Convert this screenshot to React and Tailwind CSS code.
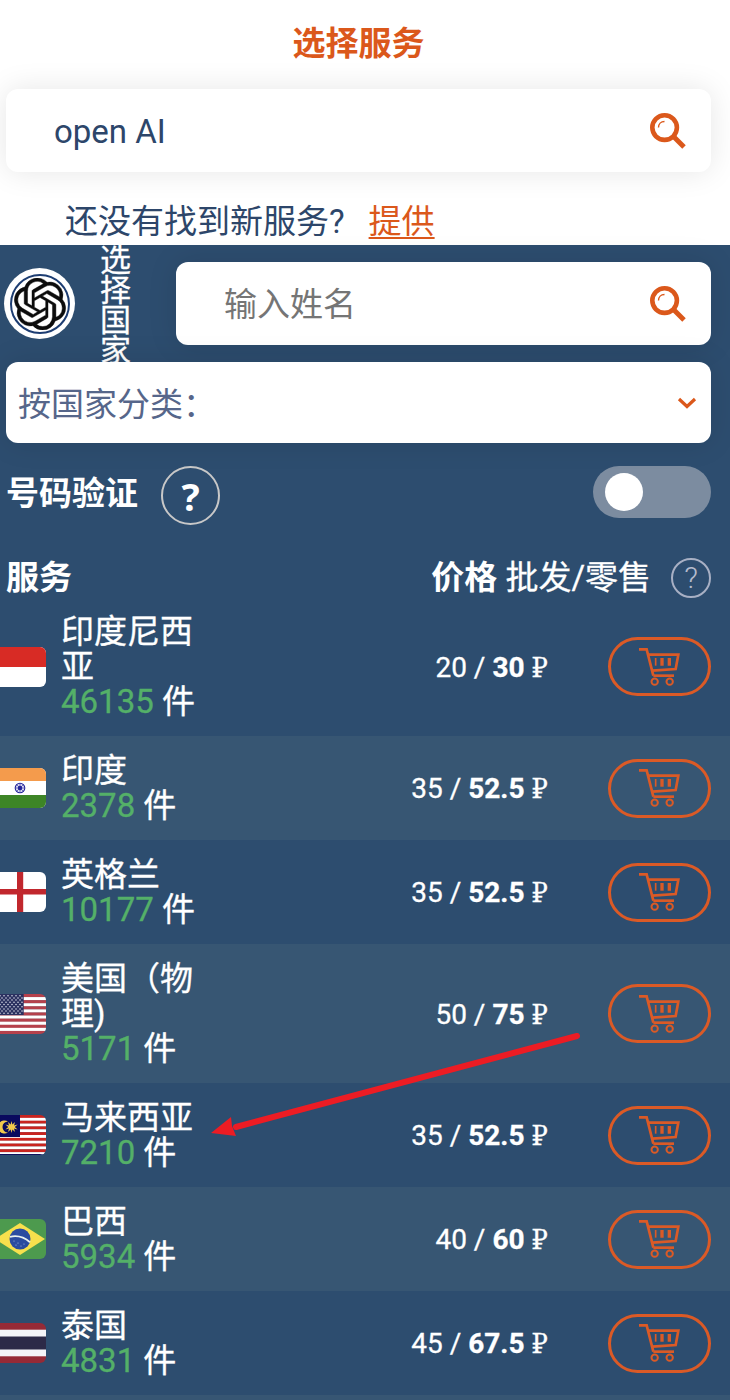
import React from "react";
import { SiOpenai } from "react-icons/si";

function FlagFrame({ children }) {
  return (
    <svg viewBox="6 0 46 40" className="block h-10 w-[46px] rounded-r-md" aria-hidden="true">
      {children}
    </svg>
  );
}

function Stripes({ colors, count }) {
  const h = 40 / count;
  return Array.from({ length: count }, (_, i) => (
    <rect key={i} x="0" y={i * h} width="52" height={h + 0.2} fill={colors[i % colors.length]} />
  ));
}

const flags = {
  id: (
    <>
      <rect width="52" height="40" fill="#fff" />
      <rect width="52" height="20" fill="#d82b25" />
    </>
  ),
  in: (
    <>
      <rect width="52" height="40" fill="#fff" />
      <rect width="52" height="13" fill="#f49b4c" />
      <rect y="27" width="52" height="13" fill="#3d8526" />
      <circle cx="26" cy="20" r="4.8" fill="#dcdcf2" stroke="#23239a" strokeWidth="1.1" />
      <path d="M26 15.5v9M21.5 20h9M22.8 16.8l6.400 6.400M29.200 16.800l-6.400 6.400" stroke="#23239a" strokeWidth="0.6" />
      <circle cx="26" cy="20" r="2.2" fill="#23239a" />
    </>
  ),
  en: (
    <>
      <rect width="52" height="40" fill="#fff" />
      <rect x="23" width="6.2" height="40" fill="#c1272d" />
      <rect y="17" width="52" height="5.5" fill="#c1272d" />
    </>
  ),
  us: (
    <>
      <Stripes colors={["#b5414c", "#ffffff"]} count={13} />
      <rect width="29.7" height="21" fill="#2b3160" />
      {Array.from({ length: 9 }, (_, r) =>
        Array.from({ length: 7 }, (_, c) => (
          <circle key={`${r}-${c}`} cx={2 + c * 4 + (r % 2) * 2} cy={1.7 + r * 2.2} r="0.75" fill="#e4e6f0" />
        ))
      )}
    </>
  ),
  my: (
    <>
      <Stripes colors={["#c9241f", "#ffffff"]} count={14} />
      <rect y="39" width="52" height="1" fill="#10105c" />
      <rect width="26" height="22" fill="#0a0a5e" />
      <path d="M14 6.5a6.5 6.5 0 1 0 0 11a5.5 5.5 0 1 1 0-11z" fill="#f2c94c" />
      <path d="M17.5 6l.9 3.6 2.600-2.700-1 3.500 3.600-.8-2.800 2.400 2.800 2.400-3.600-.8 1 3.500-2.600-2.700-.9 3.600-.9-3.600-2.600 2.700 1-3.500-3.600.8 2.800-2.400-2.800-2.400 3.600.8-1-3.500 2.600 2.700z" fill="#f2c94c" />
    </>
  ),
  br: (
    <>
      <rect width="52" height="40" fill="#4d9a4e" />
      <path d="M1 20L26 4l25 16-25 16z" fill="#f7e04d" />
      <circle cx="26" cy="20" r="10.5" fill="#2a4ba0" />
      <path d="M16 17.800c7-1.600 14.500.6 20 5.400" fill="none" stroke="#e8f0ee" strokeWidth="1.8" />
      <g fill="#a9bbe0">
        <circle cx="20" cy="22" r=".6" />
        <circle cx="24" cy="24" r=".6" />
        <circle cx="27" cy="27" r=".6" />
        <circle cx="30" cy="25" r=".6" />
        <circle cx="22" cy="26" r=".6" />
      </g>
    </>
  ),
  th: (
    <>
      <rect width="52" height="40" fill="#962a36" />
      <rect y="6.700" width="52" height="26.600" fill="#f4f4f8" />
      <rect y="13.500" width="52" height="13" fill="#2c2a48" />
    </>
  ),
};

const countries = [
  { code: "id", name: "印度尼西亚", count: 46135, bulk: "20", retail: "30" },
  { code: "in", name: "印度", count: 2378, bulk: "35", retail: "52.5" },
  { code: "en", name: "英格兰", count: 10177, bulk: "35", retail: "52.5" },
  { code: "us", name: "美国（物理)", count: 5171, bulk: "50", retail: "75" },
  { code: "my", name: "马来西亚", count: 7210, bulk: "35", retail: "52.5" },
  { code: "br", name: "巴西", count: 5934, bulk: "40", retail: "60" },
  { code: "th", name: "泰国", count: 4831, bulk: "45", retail: "67.5" },
];

function SearchIcon() {
  return (
    <svg viewBox="0 0 36 36" className="size-9" fill="none" stroke="#db581b" aria-hidden="true">
      <circle cx="14.6" cy="14.6" r="12.3" strokeWidth="4.6" />
      <path d="M23.500 23.500L34 34" strokeWidth="5" />
      <path d="M8.500 14.500c0-3.500 2.400-6 6-6" strokeWidth="1.4" />
    </svg>
  );
}

function CartIcon() {
  return (
    <svg viewBox="147 83 123 114" className="h-[38px] w-[41px]" fill="none" stroke="#db5a26" strokeWidth="8" aria-hidden="true">
      <path d="M147 87H170L190 166" />
      <path d="M175 103H265L257 146L187 151" />
      <path d="M190 166H252" />
      <path d="M197 113V136" strokeWidth="5" />
      <path d="M216 113V136M238 113V136" strokeWidth="10" />
      <circle cx="194" cy="184" r="9.500" strokeWidth="6" />
      <circle cx="239" cy="184" r="9.500" strokeWidth="6" />
    </svg>
  );
}

function SearchField({ label, ...props }) {
  return (
    <div className="flex h-[83px] min-w-0 flex-1 items-center rounded-xl bg-white pl-12 pr-[25px] shadow-[0_0_30px_rgba(0,0,0,0.1)]">
      <input
        aria-label={label}
        className="h-12 min-w-0 flex-1 bg-transparent pt-0.5 text-[33px] text-[#2d466a] outline-none placeholder:text-[#757575]"
        {...props}
      />
      <button type="button" aria-label="搜索" className="shrink-0">
        <SearchIcon />
      </button>
    </div>
  );
}

function CountryRow({ country }) {
  return (
    <tr className="even:bg-[#375673]">
      <td className="py-[17px]">
        <div className="flex items-center gap-[15px]">
          <FlagFrame>{flags[country.code]}</FlagFrame>
          <div className="w-[134px] text-[33px] leading-[35px] [-webkit-text-stroke:0.3px]">
            <div>{country.name}</div>
            <div>
              <span className="text-[#54b068]">{country.count}</span> 件
            </div>
          </div>
        </div>
      </td>
      <td className="whitespace-nowrap text-right text-[28px] [-webkit-text-stroke:0.3px]">
        {country.bulk} / <b>{country.retail}</b>{" "}
        <span className="font-['Noto_Serif']">₽</span>
      </td>
      <td className="w-[182px] pr-[19px]">
        <button
          type="button"
          aria-label={`购买 ${country.name}`}
          className="ml-auto flex h-[59px] w-[103px] items-center justify-center rounded-full border-[3px] border-[#db5a26]"
        >
          <CartIcon />
        </button>
      </td>
    </tr>
  );
}

export default function App() {
  return (
    <div className="min-h-screen overflow-hidden bg-white font-[Roboto,'Noto_Sans_CJK_SC',sans-serif] text-[#2d466a]">
      <section className="h-[245px] pl-[6px] pr-[19px]">
        <h1 className="h-[89px] pt-5 text-center text-[33px] font-bold leading-[48px] text-[#db581b]">选择服务</h1>
        <div className="flex">
          <SearchField label="选择服务" defaultValue="open AI" />
        </div>
        <p className="flex gap-6 pl-[59px] pt-[26px] text-[33px] leading-[48px]">
          <span>还没有找到新服务?</span>
          <a href="#offer" className="text-[#db581b] underline decoration-2 underline-offset-4">提供</a>
        </p>
      </section>

      <section className="relative bg-[#2d4d6f] text-white">
        <div className="flex h-[117px] items-center pl-1 pr-[19px]">
          <div className="flex size-[71px] shrink-0 items-center justify-center rounded-full bg-white">
            <div className="flex size-[60px] items-center justify-center rounded-full border-2 border-[#1d3d72]">
              <SiOpenai className="size-[52px] stroke-[#0c0c0c] stroke-[0.2] text-[#0c0c0c]" />
            </div>
          </div>
          <h2 className="ml-[25px] mr-11 w-8 pt-1 text-[31px] leading-[30px] [-webkit-text-stroke:0.3px]">选择国家</h2>
          <SearchField label="输入姓名" placeholder="输入姓名" />
        </div>

        <div className="relative pl-[6px] pr-[19px]">
          <select
            aria-label="按国家分类"
            className="block h-[81px] w-full appearance-none rounded-xl bg-white pl-3 pt-1 text-[33px] text-[#56668a] shadow-[0_0_30px_rgba(0,0,0,0.1)] outline-none"
          >
            <option>按国家分类：</option>
          </select>
          <svg viewBox="0 0 20 12" className="pointer-events-none absolute right-[33px] top-[35px] h-3 w-5" fill="none" stroke="#db581b" strokeWidth="3.2" aria-hidden="true">
            <path d="M2 2L10 9.500L18 2" />
          </svg>
        </div>

        <div className="flex items-start pb-[34px] pl-[6px] pr-[19px] pt-[23px]">
          <label htmlFor="verify" className="text-[33px] font-bold leading-[56px]">号码验证</label>
          <button
            type="button"
            aria-label="帮助"
            className="ml-[23px] flex size-[59px] items-center justify-center rounded-full border-2 border-[#c8c8c8] font-['Noto_Sans'] text-[38px] font-bold leading-none"
          >
            ?
          </button>
          <input
            id="verify"
            type="checkbox"
            role="switch"
            className="ml-auto flex h-[52px] w-[118px] appearance-none items-center rounded-full bg-[#7c8ca0] px-3 before:block before:size-[38px] before:rounded-full before:bg-white before:content-[''] checked:justify-end"
          />
        </div>

        <table className="w-full border-collapse">
          <thead>
            <tr>
              <th className="h-[38px] pl-[6px] text-left text-[33px] leading-[38px]">服务</th>
              <th colSpan={2} className="pr-[19px] text-[33px] font-normal leading-[38px]">
                <div className="flex h-[38px] items-center justify-end">
                  <span><b>价格</b> <span className="[-webkit-text-stroke:0.3px]">批发/零售</span></span>
                  <button
                    type="button"
                    aria-label="价格说明"
                    className="ml-5 flex size-10 items-center justify-center rounded-full border-2 border-[#a8b0c4] text-[30px] font-light leading-none text-[#b4bbcd]"
                  >
                    ?
                  </button>
                </div>
              </th>
            </tr>
          </thead>
          <tbody>
            {countries.map((c) => (
              <CountryRow key={c.code} country={c} />
            ))}
            <tr aria-hidden="true" className="even:bg-[#375673]">
              <td colSpan={3} className="h-3"></td>
            </tr>
          </tbody>
        </table>

        <svg viewBox="0 0 370 106" className="pointer-events-none absolute left-[211px] top-[787px] h-[106px] w-[370px]" aria-hidden="true">
          <path d="M366 4L25 95" stroke="#ec1c24" strokeWidth="6" strokeLinecap="round" />
          <path d="M0 101L20 85L21 94L25 104Z" fill="#ec1c24" />
        </svg>
      </section>
    </div>
  );
}
